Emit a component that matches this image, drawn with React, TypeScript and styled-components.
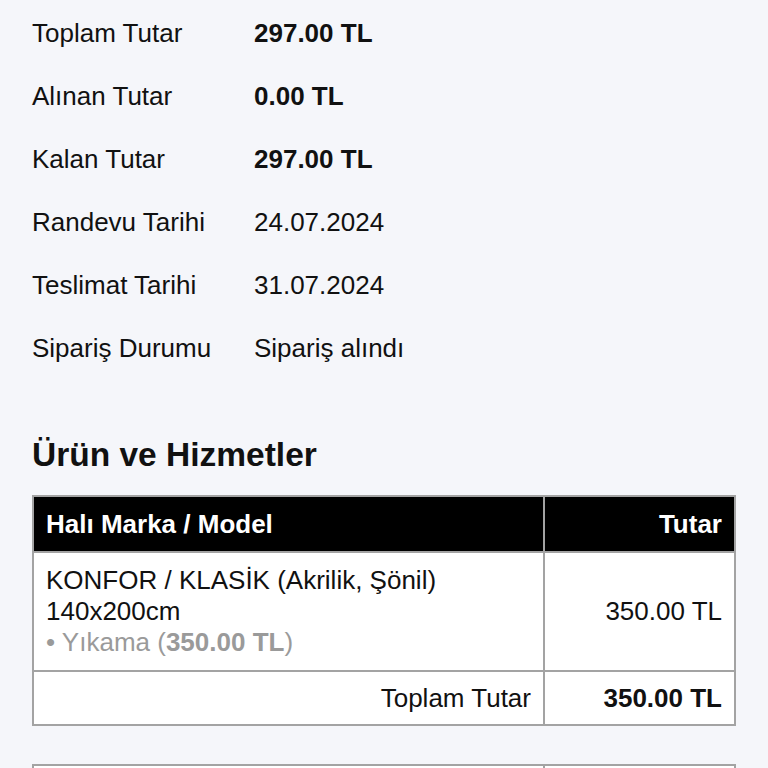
import React from "react";
import styled, { createGlobalStyle } from "styled-components";

const Global = createGlobalStyle`
  html, body { margin: 0; padding: 0; background: #f5f6fa; }
  body { font-family: "Liberation Sans", Arial, Helvetica, sans-serif; color: #111; }
`;

const Page = styled.div`
  padding: 2px 32px 40px 32px;
`;

const InfoList = styled.div`
  display: grid;
  grid-template-columns: 222px 1fr;
  grid-auto-rows: 63px;
  align-items: center;
  font-size: 26px;
`;

const Label = styled.div`
  color: #111;
`;

const Value = styled.div<{ $bold?: boolean }>`
  font-weight: ${(p) => (p.$bold ? 700 : 400)};
  color: #111;
`;

const Heading = styled.h2`
  margin: 55px 0 20px 0;
  font-size: 33.5px;
  line-height: 40px;
  font-weight: 700;
  color: #111;
`;

const Table = styled.table`
  width: 100%;
  border-collapse: collapse;
  background: #fff;
  font-size: 26px;
  margin-bottom: 38px;
`;

const Th = styled.th<{ $right?: boolean }>`
  background: #000;
  color: #fff;
  font-weight: 700;
  text-align: ${(p) => (p.$right ? "right" : "left")};
  padding: 12px 12px;
  line-height: 30px;
  border: 2px solid #a3a3a3;
`;

const Td = styled.td<{ $right?: boolean; $bold?: boolean; $w?: string; $compact?: boolean }>`
  text-align: ${(p) => (p.$right ? "right" : "left")};
  font-weight: ${(p) => (p.$bold ? 700 : 400)};
  padding: ${(p) => (p.$compact ? "11px 12px 10px" : "12px 12px")};
  line-height: 31px;
  border: 2px solid #a3a3a3;
  vertical-align: middle;
  width: ${(p) => p.$w || "auto"};
  color: #111;
`;

const SubItem = styled.div`
  color: #9a9a9a;
  b { font-weight: 700; }
`;

const rows: { label: string; value: string; bold?: boolean }[] = [
  { label: "Toplam Tutar", value: "297.00 TL", bold: true },
  { label: "Alınan Tutar", value: "0.00 TL", bold: true },
  { label: "Kalan Tutar", value: "297.00 TL", bold: true },
  { label: "Randevu Tarihi", value: "24.07.2024" },
  { label: "Teslimat Tarihi", value: "31.07.2024" },
  { label: "Sipariş Durumu", value: "Sipariş alındı" },
];

export default function App() {
  return (
    <>
      <Global />
      <Page>
        <InfoList>
          {rows.map((r) => (
            <React.Fragment key={r.label}>
              <Label>{r.label}</Label>
              <Value $bold={r.bold}>{r.value}</Value>
            </React.Fragment>
          ))}
        </InfoList>
        <Heading>Ürün ve Hizmetler</Heading>
        <Table>
          <thead>
            <tr>
              <Th>Halı Marka / Model</Th>
              <Th $right>Tutar</Th>
            </tr>
          </thead>
          <tbody>
            <tr>
              <Td>
                KONFOR / KLASİK (Akrilik, Şönil)
                <br />
                140x200cm
                <SubItem>
                  • Yıkama (<b>350.00 TL</b>)
                </SubItem>
              </Td>
              <Td $right $w="165px">350.00 TL</Td>
            </tr>
            <tr>
              <Td $right $compact>Toplam Tutar</Td>
              <Td $right $bold $compact>350.00 TL</Td>
            </tr>
          </tbody>
        </Table>
        <Table>
          <tbody>
            <tr>
              <Td>Ara Toplam</Td>
              <Td $right $w="165px">350.00 TL</Td>
            </tr>
          </tbody>
        </Table>
      </Page>
    </>
  );
}
